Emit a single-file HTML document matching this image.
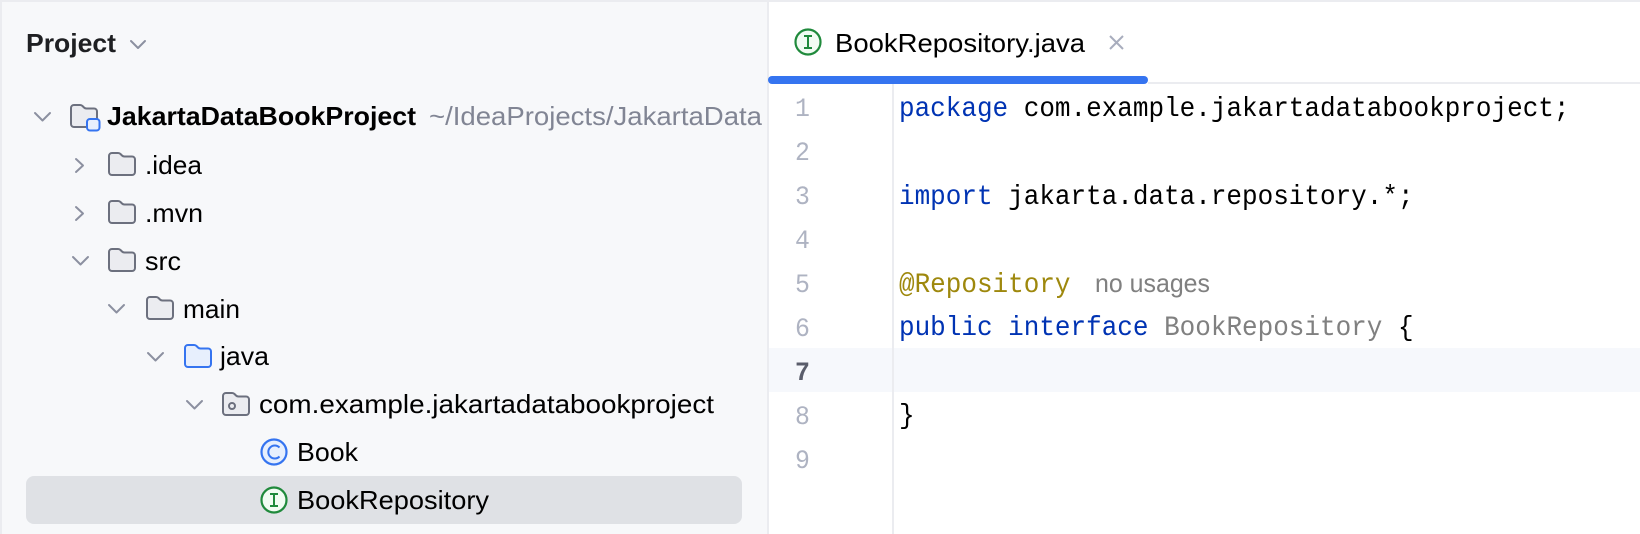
<!DOCTYPE html>
<html>
<head>
<meta charset="utf-8">
<style>
html,body{margin:0;padding:0;background:#fff;width:1640px;height:534px;overflow:hidden}
svg{display:block}
.s{font-family:"Liberation Sans",sans-serif;font-size:26px;fill:#000}
.m{font-family:"Liberation Mono",monospace;font-size:28px;fill:#000}
.k{fill:#0033b3}
.n{font-family:"Liberation Mono",monospace;font-size:27px;fill:#aeb3c2}
.c{fill:none;stroke:#8c90a0;stroke-width:2;stroke-linecap:round;stroke-linejoin:round}
.f{fill:#ebecf0;stroke:#6c707e;stroke-width:2}
</style>
</head>
<body>
<svg width="1640" height="534" viewBox="0 0 1640 534" xmlns="http://www.w3.org/2000/svg">
<defs>
<path id="fd" d="M1 4a3 3 0 0 1 3-3h6a3.500 3.500 0 0 1 2.500 1l1.500 1.500a3.500 3.500 0 0 0 2.500 1h7.500a3 3 0 0 1 3 3v12.500a3 3 0 0 1-3 3H4a3 3 0 0 1-3-3z"/>
</defs>
<rect width="1640" height="534" fill="#fff"/>
<rect x="0" y="0" width="768" height="534" fill="#f7f8fa"/>
<rect x="0" y="0" width="1640" height="2" fill="#ebecf0"/>
<rect x="0" y="0" width="2" height="534" fill="#ebecf0"/>
<rect x="767" y="0" width="2" height="534" fill="#ebecf0"/>

<text class="s" x="26" y="52" font-weight="700" style="fill:#1e1f22" textLength="90" lengthAdjust="spacingAndGlyphs">Project</text>
<path class="c" d="M131 41l7 7 7-7"/>

<rect x="26" y="476" width="716" height="48" rx="8" fill="#dfe1e5"/>

<path class="c" d="M35 113l7.500 7.500 7.500-7.500"/>
<use href="#fd" x="70" y="104" class="f"/>
<rect x="87" y="119" width="12.500" height="11.500" rx="3" fill="#e7effd" stroke="#3574f0" stroke-width="2"/>
<text class="s" x="107" y="125" font-weight="700" textLength="309" lengthAdjust="spacingAndGlyphs">JakartaDataBookProject</text>
<text class="s" x="429" y="125" style="fill:#818594" textLength="333" lengthAdjust="spacingAndGlyphs">~/IdeaProjects/JakartaData</text>

<path class="c" d="M76 159l7 6.500-7 6.500"/>
<use href="#fd" x="108" y="152" class="f"/>
<text class="s" x="145" y="174" textLength="57" lengthAdjust="spacingAndGlyphs">.idea</text>

<path class="c" d="M76 207l7 6.500-7 6.500"/>
<use href="#fd" x="108" y="200" class="f"/>
<text class="s" x="145" y="222" textLength="58" lengthAdjust="spacingAndGlyphs">.mvn</text>

<path class="c" d="M73 257l7.500 7.500 7.500-7.500"/>
<use href="#fd" x="108" y="248" class="f"/>
<text class="s" x="145" y="270" textLength="36" lengthAdjust="spacingAndGlyphs">src</text>

<path class="c" d="M109 305l7.500 7.500 7.500-7.500"/>
<use href="#fd" x="146" y="296" class="f"/>
<text class="s" x="183" y="318" textLength="57" lengthAdjust="spacingAndGlyphs">main</text>

<path class="c" d="M148 353l7.500 7.500 7.500-7.500"/>
<use href="#fd" x="184" y="344" fill="#e7effd" stroke="#3574f0" stroke-width="2"/>
<text class="s" x="220" y="365" textLength="49" lengthAdjust="spacingAndGlyphs">java</text>

<path class="c" d="M187 401l7.500 7.500 7.500-7.500"/>
<use href="#fd" x="222" y="392" class="f"/>
<circle cx="232" cy="406" r="3" fill="none" stroke="#6c707e" stroke-width="2"/>
<text class="s" x="259" y="413" textLength="455" lengthAdjust="spacingAndGlyphs">com.example.jakartadatabookproject</text>

<circle cx="274" cy="452" r="12.500" fill="#e7effd" stroke="#3574f0" stroke-width="2.200"/>
<path d="M279.500 447.500a6.500 6.500 0 1 0 0 9" fill="none" stroke="#3574f0" stroke-width="2"/>
<text class="s" x="297" y="461" textLength="61" lengthAdjust="spacingAndGlyphs">Book</text>

<circle cx="274" cy="500" r="12.500" fill="#f2fcf3" stroke="#208a3c" stroke-width="2.200"/>
<path d="M270 494h8M270 506h8M274 494v12" fill="none" stroke="#208a3c" stroke-width="2"/>
<text class="s" x="297" y="509" textLength="192" lengthAdjust="spacingAndGlyphs">BookRepository</text>

<rect x="1148" y="82" width="492" height="2" fill="#ebecf0"/>
<circle cx="808" cy="42" r="12.500" fill="#f2fcf3" stroke="#208a3c" stroke-width="2.200"/>
<path d="M804 36h8M804 48h8M808 36v12" fill="none" stroke="#208a3c" stroke-width="2"/>
<text class="s" x="835" y="52" textLength="250" lengthAdjust="spacingAndGlyphs">BookRepository.java</text>
<path d="M1110 36l13 13M1123 36l-13 13" fill="none" stroke="#a8adbd" stroke-width="2"/>
<rect x="768" y="76" width="380" height="8" rx="4" fill="#3574f0"/>

<rect x="769" y="348" width="871" height="44" fill="#f6f8fc"/>
<rect x="892" y="84" width="2" height="450" fill="#ebecf0"/>

<g transform="translate(795 0) scale(.92 1)">
<text class="n" x="0" y="116">1</text>
<text class="n" x="0" y="160">2</text>
<text class="n" x="0" y="204">3</text>
<text class="n" x="0" y="248">4</text>
<text class="n" x="0" y="292">5</text>
<text class="n" x="0" y="336">6</text>
<text class="n" x="0" y="380" font-weight="700" style="fill:#5a5d6b">7</text>
<text class="n" x="0" y="424">8</text>
<text class="n" x="0" y="468">9</text>
</g>

<g transform="translate(899 0) scale(.9286 1)">
<text class="m" x="0" y="116" xml:space="preserve"><tspan class="k">package</tspan> com.example.jakartadatabookproject;</text>
<text class="m" x="0" y="204" xml:space="preserve"><tspan class="k">import</tspan> jakarta.data.repository.*;</text>
<text class="m" x="0" y="292" style="fill:#9e880d">@Repository</text>
<text class="m" x="0" y="335" xml:space="preserve"><tspan class="k">public interface</tspan> <tspan style="fill:#808080">BookRepository</tspan> {</text>
<text class="m" x="0" y="423">}</text>
</g>
<text class="s" x="1095" y="292" style="fill:#808080" textLength="115" lengthAdjust="spacingAndGlyphs">no usages</text>
</svg>
</body>
</html>
